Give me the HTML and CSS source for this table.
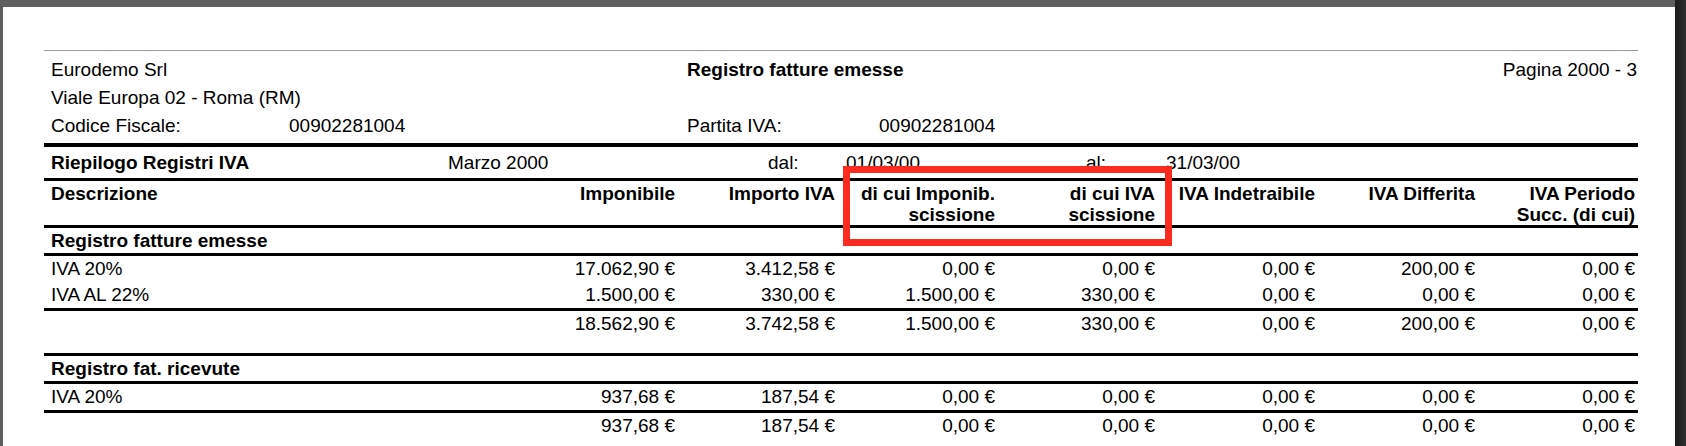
FILE: index.html
```html
<!DOCTYPE html>
<html lang="it">
<head>
<meta charset="utf-8">
<title>Registro fatture emesse</title>
<link rel="stylesheet" href="styles.css">
</head>
<body>
<div class="page">
  <div class="content">
    <div class="rule-thin"></div>
    <div class="head">
      <div class="h-company">Eurodemo Srl</div>
      <div class="h-title">Registro fatture emesse</div>
      <div class="h-page">Pagina 2000 - 3</div>
      <div class="h-address">Viale Europa 02 - Roma (RM)</div>
      <div>Codice Fiscale:</div>
      <div>00902281004</div>
      <div>Partita IVA:</div>
      <div class="h-span">00902281004</div>
    </div>
    <div class="rule-heavy"></div>
    <div class="period">
      <span class="p-title">Riepilogo Registri IVA</span>
      <span class="p-month">Marzo 2000</span>
      <span class="p-lbl">dal:</span>
      <span class="p-date">01/03/00</span>
      <span class="p-lbl2">al:</span>
      <span>31/03/00</span>
    </div>
    <div class="rule"></div>
    <div class="grid thead">
      <div class="desc">Descrizione</div>
      <div class="num">Imponibile</div>
      <div class="num">Importo IVA</div>
      <div class="num">di cui Imponib.<br>scissione</div>
      <div class="num">di cui IVA<br>scissione</div>
      <div class="num">IVA Indetraibile</div>
      <div class="num">IVA Differita</div>
      <div class="num">IVA Periodo<br>Succ. (di cui)</div>
    </div>
    <div class="rule"></div>
    <div class="section">Registro fatture emesse</div>
    <div class="rule"></div>
    <div class="grid row">
      <div class="desc">IVA 20%</div>
      <div class="num">17.062,90 €</div>
      <div class="num">3.412,58 €</div>
      <div class="num">0,00 €</div>
      <div class="num">0,00 €</div>
      <div class="num">0,00 €</div>
      <div class="num">200,00 €</div>
      <div class="num">0,00 €</div>
    </div>
    <div class="grid row">
      <div class="desc">IVA AL 22%</div>
      <div class="num">1.500,00 €</div>
      <div class="num">330,00 €</div>
      <div class="num">1.500,00 €</div>
      <div class="num">330,00 €</div>
      <div class="num">0,00 €</div>
      <div class="num">0,00 €</div>
      <div class="num">0,00 €</div>
    </div>
    <div class="rule"></div>
    <div class="grid row total">
      <div class="desc"></div>
      <div class="num">18.562,90 €</div>
      <div class="num">3.742,58 €</div>
      <div class="num">1.500,00 €</div>
      <div class="num">330,00 €</div>
      <div class="num">0,00 €</div>
      <div class="num">200,00 €</div>
      <div class="num">0,00 €</div>
    </div>
    <div class="rule"></div>
    <div class="section">Registro fat. ricevute</div>
    <div class="rule"></div>
    <div class="grid row">
      <div class="desc">IVA 20%</div>
      <div class="num">937,68 €</div>
      <div class="num">187,54 €</div>
      <div class="num">0,00 €</div>
      <div class="num">0,00 €</div>
      <div class="num">0,00 €</div>
      <div class="num">0,00 €</div>
      <div class="num">0,00 €</div>
    </div>
    <div class="rule"></div>
    <div class="grid row">
      <div class="desc"></div>
      <div class="num">937,68 €</div>
      <div class="num">187,54 €</div>
      <div class="num">0,00 €</div>
      <div class="num">0,00 €</div>
      <div class="num">0,00 €</div>
      <div class="num">0,00 €</div>
      <div class="num">0,00 €</div>
    </div>
  </div>
  <div class="highlight"></div>
</div>
</body>
</html>
```

FILE: styles.css
```css
html, body {
  margin: 0;
  padding: 0;
  height: 100%;
  overflow: hidden;
}
body {
  background: linear-gradient(to right, #5f5f5f 0, #5f5f5f 1675px, #1c1c1c 1675px, #2e2e2e 1686px);
  font-family: "Liberation Sans", Arial, sans-serif;
  font-size: 19px;
  color: #000;
}
.page {
  position: relative;
  margin: 7px 0 0 3px;
  width: 1672px;
  height: 439px;
  background: #fff;
}
.content {
  margin-left: 41px;
  width: 1594px;
  padding-top: 43px;
}
.rule-thin {
  height: 1px;
  background: #9a9a9a;
}
.head {
  display: grid;
  grid-template-columns: 238px 398px 192px 1fr auto;
  grid-auto-rows: 28px;
  align-items: center;
  padding: 5px 1px 3px 7px;
}
.h-company { grid-column: 1 / 3; }
.h-title { grid-column: 3 / 5; font-weight: bold; }
.h-page { grid-column: 5; text-align: right; }
.h-address { grid-column: 1 / 6; }
.h-span { grid-column: 4 / 6; }
.rule-heavy {
  height: 4px;
  background: #000;
}
.rule {
  height: 3px;
  background: #000;
}
.period {
  display: flex;
  align-items: center;
  height: 31px;
  padding-left: 7px;
}
.p-title { width: 397px; font-weight: bold; }
.p-month { width: 320px; }
.p-lbl { width: 78px; }
.p-date { width: 240px; }
.p-lbl2 { width: 80px; }
.grid {
  display: grid;
  grid-template-columns: 475px repeat(7, 160px);
}
.desc { padding-left: 7px; }
.num { text-align: right; padding-right: 4px; }
.thead {
  font-weight: bold;
  line-height: 21px;
  padding: 2px 0 0;
}
.section {
  font-weight: bold;
  height: 25px;
  line-height: 25px;
  padding-left: 7px;
}
.row {
  line-height: 26px;
}
.total {
  padding-bottom: 16px;
}
.highlight {
  position: absolute;
  left: 840px;
  top: 159px;
  width: 315px;
  height: 66px;
  border: 7px solid #fc2b1f;
}
```
